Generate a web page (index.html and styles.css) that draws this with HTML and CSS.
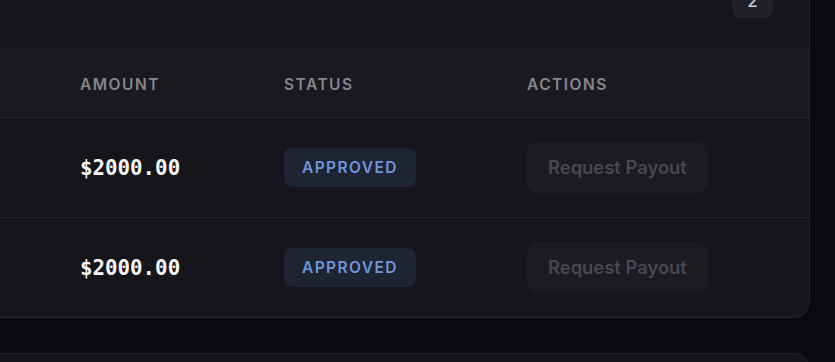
FILE: index.html
```html
<!DOCTYPE html>
<html lang="en">
<head>
<meta charset="utf-8">
<title>Payouts</title>
<link rel="stylesheet" href="styles.css">
</head>
<body>
<div class="page">
  <section class="card">
    <div class="card-top">
      <span class="page-badge">2</span>
    </div>
    <div class="table">
      <div class="row head">
        <div class="cell"></div>
        <div class="cell">Amount</div>
        <div class="cell">Status</div>
        <div class="cell">Actions</div>
      </div>
      <div class="row">
        <div class="cell"></div>
        <div class="cell amount">$2000.00</div>
        <div class="cell"><span class="status">Approved</span></div>
        <div class="cell"><button class="btn" disabled>Request Payout</button></div>
      </div>
      <div class="row last">
        <div class="cell"></div>
        <div class="cell amount">$2000.00</div>
        <div class="cell"><span class="status">Approved</span></div>
        <div class="cell"><button class="btn" disabled>Request Payout</button></div>
      </div>
    </div>
  </section>
  <section class="card next"></section>
</div>
</body>
</html>
```

FILE: styles.css
```css
* { box-sizing: border-box; }
html, body { margin: 0; padding: 0; }
body {
  background: #0a0a0e;
  font-family: Inter, "Noto Sans", sans-serif;
  color: #e6e6ea;
  overflow: hidden;
  height: 362px;
}
.page {
  display: flex;
  flex-direction: column;
  gap: 35px;
}
.card {
  margin: -40px 25px 0 -200px;
  background: #16151b;
  border: 1px solid #232228;
  border-radius: 16px;
  overflow: hidden;
}
.card.next {
  margin-top: 0;
  height: 120px;
  background: #141318;
  border-color: #222127;
}
.card-top {
  display: flex;
  justify-content: flex-end;
  padding: 17px 36px 31px;
}
.page-badge {
  display: flex;
  align-items: center;
  justify-content: center;
  width: 41px;
  height: 40px;
  border-radius: 8px;
  background: #222127;
  color: #c9c9cf;
  font-size: 17px;
  font-weight: 500;
  padding-top: 6px;
}
.row {
  display: grid;
  grid-template-columns: 279px 204px 243px 1fr;
  align-items: center;
  height: 100px;
  border-bottom: 1px solid #242329;
}
.row.head {
  height: 69px;
  background: #1a191f;
  border-bottom-color: #26252b;
}
.row.last {
  border-bottom: none;
  height: 99px;
}
.head .cell {
  font-size: 15.5px;
  font-weight: 600;
  text-transform: uppercase;
  letter-spacing: 1.5px;
  color: #87868d;
  padding-top: 2px;
}
.amount {
  font-family: "DejaVu Sans Mono", "Liberation Mono", monospace;
  font-weight: 700;
  font-size: 20.8px;
  color: #f7f7f8;
}
.status {
  display: inline-flex;
  align-items: center;
  height: 39px;
  padding: 0 18px;
  border-radius: 8px;
  background: #1e2431;
  color: #6f96db;
  font-size: 15.5px;
  font-weight: 600;
  letter-spacing: 1.4px;
  text-transform: uppercase;
}
.btn {
  display: inline-flex;
  align-items: center;
  height: 51px;
  padding: 0 21px;
  border: none;
  border-radius: 10px;
  background: #1c1b21;
  color: #48474e;
  font-family: Inter, "Noto Sans", sans-serif;
  font-size: 18.4px;
  font-weight: 600;
  margin-top: -1px;
}
```
